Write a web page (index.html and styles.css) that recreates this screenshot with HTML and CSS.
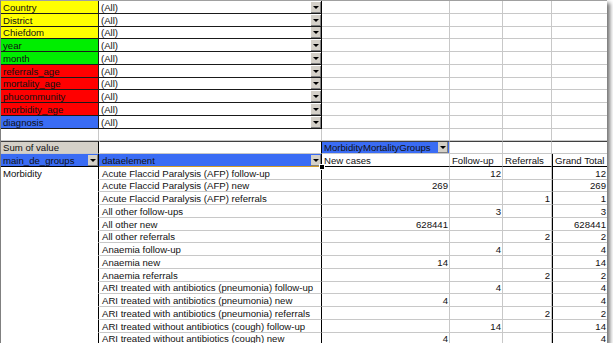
FILE: index.html
```html
<!DOCTYPE html>
<html lang="en">
<head>
  <meta charset="UTF-8" />
  <title>Pivot Table</title>
  <link rel="stylesheet" href="styles.css">
</head>
<body>
  <div class="sheet">
    <!-- page fields -->
    <div class="c pf yellow">Country</div><div class="c pv">(All)<span class="dd"></span></div><div class="c"></div><div class="c"></div><div class="c"></div><div class="c"></div>
    <div class="c pf yellow">District</div><div class="c pv">(All)<span class="dd"></span></div><div class="c"></div><div class="c"></div><div class="c"></div><div class="c"></div>
    <div class="c pf yellow">Chiefdom</div><div class="c pv">(All)<span class="dd"></span></div><div class="c"></div><div class="c"></div><div class="c"></div><div class="c"></div>
    <div class="c pf green">year</div><div class="c pv">(All)<span class="dd"></span></div><div class="c"></div><div class="c"></div><div class="c"></div><div class="c"></div>
    <div class="c pf green">month</div><div class="c pv">(All)<span class="dd"></span></div><div class="c"></div><div class="c"></div><div class="c"></div><div class="c"></div>
    <div class="c pf red">referrals_age</div><div class="c pv">(All)<span class="dd"></span></div><div class="c"></div><div class="c"></div><div class="c"></div><div class="c"></div>
    <div class="c pf red">mortality_age</div><div class="c pv">(All)<span class="dd"></span></div><div class="c"></div><div class="c"></div><div class="c"></div><div class="c"></div>
    <div class="c pf red">phucommunity</div><div class="c pv">(All)<span class="dd"></span></div><div class="c"></div><div class="c"></div><div class="c"></div><div class="c"></div>
    <div class="c pf red">morbidity_age</div><div class="c pv">(All)<span class="dd"></span></div><div class="c"></div><div class="c"></div><div class="c"></div><div class="c"></div>
    <div class="c pf blue">diagnosis</div><div class="c pv">(All)<span class="dd"></span></div><div class="c"></div><div class="c"></div><div class="c"></div><div class="c"></div>

    <div class="c"></div><div class="c"></div><div class="c"></div><div class="c"></div><div class="c"></div><div class="c"></div>

    <!-- pivot body -->
    <div class="c top datafield">Sum of value</div><div class="c top colB"></div><div class="c top blue">MorbidityMortalityGroups<span class="dd"></span></div><div class="c top"></div><div class="c top"></div><div class="c top"></div>
    <div class="c rowhdr blue">main_de_groups<span class="dd"></span></div><div class="c colB blue selected">dataelement<span class="dd"></span><span class="handle"></span></div><div class="c hdr">New cases</div><div class="c hdr">Follow-up</div><div class="c hdr">Referrals</div><div class="c hdr tot">Grand Total</div>

    <div class="c grp">Morbidity</div><div class="c colB">Acute Flaccid Paralysis (AFP) follow-up</div><div class="c num"></div><div class="c num">12</div><div class="c num"></div><div class="c num tot">12</div>
    <div class="c grp"></div><div class="c colB">Acute Flaccid Paralysis (AFP) new</div><div class="c num">269</div><div class="c num"></div><div class="c num"></div><div class="c num tot">269</div>
    <div class="c grp"></div><div class="c colB">Acute Flaccid Paralysis (AFP) referrals</div><div class="c num"></div><div class="c num"></div><div class="c num">1</div><div class="c num tot">1</div>
    <div class="c grp"></div><div class="c colB">All other follow-ups</div><div class="c num"></div><div class="c num">3</div><div class="c num"></div><div class="c num tot">3</div>
    <div class="c grp"></div><div class="c colB">All other new</div><div class="c num">628441</div><div class="c num"></div><div class="c num"></div><div class="c num tot">628441</div>
    <div class="c grp"></div><div class="c colB">All other referrals</div><div class="c num"></div><div class="c num"></div><div class="c num">2</div><div class="c num tot">2</div>
    <div class="c grp"></div><div class="c colB">Anaemia follow-up</div><div class="c num"></div><div class="c num">4</div><div class="c num"></div><div class="c num tot">4</div>
    <div class="c grp"></div><div class="c colB">Anaemia new</div><div class="c num">14</div><div class="c num"></div><div class="c num"></div><div class="c num tot">14</div>
    <div class="c grp"></div><div class="c colB">Anaemia referrals</div><div class="c num"></div><div class="c num"></div><div class="c num">2</div><div class="c num tot">2</div>
    <div class="c grp"></div><div class="c colB">ARI treated with antibiotics (pneumonia) follow-up</div><div class="c num"></div><div class="c num">4</div><div class="c num"></div><div class="c num tot">4</div>
    <div class="c grp"></div><div class="c colB">ARI treated with antibiotics (pneumonia) new</div><div class="c num">4</div><div class="c num"></div><div class="c num"></div><div class="c num tot">4</div>
    <div class="c grp"></div><div class="c colB">ARI treated with antibiotics (pneumonia) referrals</div><div class="c num"></div><div class="c num"></div><div class="c num">2</div><div class="c num tot">2</div>
    <div class="c grp"></div><div class="c colB">ARI treated without antibiotics (cough) follow-up</div><div class="c num"></div><div class="c num">14</div><div class="c num"></div><div class="c num tot">14</div>
    <div class="c grp"></div><div class="c colB">ARI treated without antibiotics (cough) new</div><div class="c num">4</div><div class="c num"></div><div class="c num"></div><div class="c num tot">4</div>
  </div>
</body>
</html>
```

FILE: styles.css
```css
body {
  margin: 0;
  background: #fff;
  font-family: "Liberation Sans", Arial, sans-serif;
  font-size: 9.6px;
  color: #111;
}
.sheet {
  box-sizing: border-box;
  width: 607px;
  height: 343px;
  overflow: hidden;
  display: grid;
  grid-template-columns: 98px 223px 128px 53px 49px 56px;
  grid-auto-rows: 12.75px;
  border-left: 1px solid #808080;
  border-top: 1px solid #a0a0a0;
  box-shadow: 3px 3px 4px rgba(0, 0, 0, 0.55);
  background: #fff;
}
.c {
  box-sizing: border-box;
  display: flex;
  align-items: flex-end;
  padding: 0 1px 0 2px;
  border-right: 1px solid #c8c8c8;
  border-bottom: 1px solid #c8c8c8;
  line-height: 11px;
  white-space: nowrap;
  overflow: hidden;
  position: relative;
}
.pf {
  border-bottom-color: #1a1a1a;
  border-right-color: #1a1a1a;
}
.pv {
  border-bottom-color: #1a1a1a;
  border-right-color: #000;
  padding-right: 0;
}
.yellow { background: #ffff00; }
.green { background: #00ee00; }
.red { background: #ff0000; }
.blue { background: #3a6cf4; }
.top {
  border-top: 1px solid #404040;
}
.datafield {
  background: #d4d0c8;
  border-right-color: #000;
}
.colB {
  border-right-color: #000;
  border-left: 1px solid transparent;
}
.rowhdr {
  border-right-color: #000;
  border-bottom-color: #000;
  padding-right: 0;
}
.selected {
  border-bottom: 1px solid #d09a2a;
  padding-right: 0;
  overflow: visible;
}
.hdr {
  border-bottom-color: #000;
}
.grp {
  border-bottom-color: transparent;
  border-right-color: #000;
}
.num {
  justify-content: flex-end;
}
.tot {
  border-left: 1px solid #000;
}
.dd {
  margin-left: auto;
  width: 10px;
  height: 11px;
  flex: none;
  background: #d4d0c8;
  box-sizing: border-box;
  border-right: 1px solid #808080;
  border-bottom: 1px solid #808080;
  position: relative;
}
.dd::after {
  content: "";
  position: absolute;
  left: 2px;
  top: 4px;
  border-left: 3px solid transparent;
  border-right: 3px solid transparent;
  border-top: 3px solid #000;
}
.handle {
  position: absolute;
  right: -4px;
  bottom: -4px;
  width: 4px;
  height: 4px;
  background: #000;
  border: 1px solid #fff;
  z-index: 2;
}
```
